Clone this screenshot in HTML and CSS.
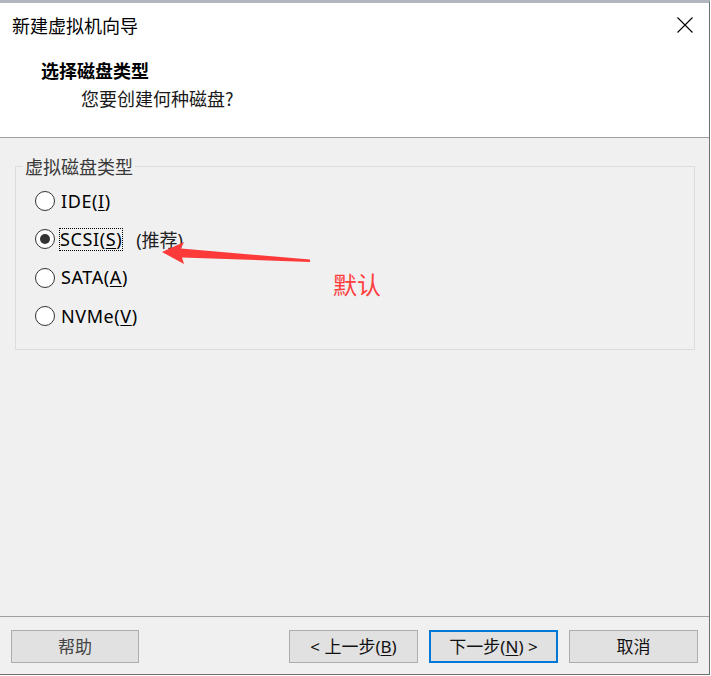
FILE: index.html
```html
<!DOCTYPE html>
<html lang="zh-CN">
<head>
<meta charset="utf-8">
<title>新建虚拟机向导</title>
<link rel="stylesheet" href="styles.css">
</head>
<body>
<div class="window">
  <header class="header">
    <div class="title-row">
      <span class="title">新建虚拟机向导</span>
      <svg class="close" width="16" height="16" viewBox="0 0 16 16"><path d="M0.5 0.5 L15.5 15.5 M15.5 0.5 L0.5 15.5" stroke="#000" stroke-width="1.1" fill="none"/></svg>
    </div>
    <h1 class="heading">选择磁盘类型</h1>
    <p class="subtitle">您要创建何种磁盘?</p>
  </header>
  <main class="body">
    <fieldset class="group">
      <legend class="legend">虚拟磁盘类型</legend>
      <div class="options">
        <div class="option"><span class="radio"></span><span class="label">IDE(<u>I</u>)</span></div>
        <div class="option"><span class="radio checked"></span><span class="label focus">SCSI(<u>S</u>)</span><span class="note">(推荐)</span></div>
        <div class="option"><span class="radio"></span><span class="label">SATA(<u>A</u>)</span></div>
        <div class="option"><span class="radio"></span><span class="label">NVMe(<u>V</u>)</span></div>
      </div>
    </fieldset>
  </main>
  <footer class="footer">
    <button class="btn help">帮助</button>
    <button class="btn">&lt; 上一步(<u>B</u>)</button>
    <button class="btn primary">下一步(<u>N</u>) &gt;</button>
    <button class="btn">取消</button>
  </footer>
  <svg class="arrow" width="711" height="676" viewBox="0 0 711 676"><path d="M162 252 L184 242 L181 248.5 L310 259.5 L310 262 L182 257.5 L184 264 Z" fill="#fd3a3a"/></svg>
  <span class="annot">默认</span>
</div>
</body>
</html>
```

FILE: styles.css
```css
* { box-sizing: border-box; }
html, body { margin: 0; padding: 0; background: #fff; }
body {
  width: 711px;
  height: 676px;
  overflow: hidden;
  font-family: "Noto Sans", "Noto Sans CJK SC", sans-serif;
}
.window {
  position: relative;
  width: 710px;
  height: 675px;
  display: flex;
  flex-direction: column;
  border-top: 3px solid #b2b6be;
  border-right: 1px solid #6f6f6f;
  border-bottom: 1px solid #6f6f6f;
  background: #f0f0f0;
}
.header {
  background: #fff;
  height: 135px;
  border-bottom: 1px solid #a0a0a0;
  padding-top: 10px;
  flex: none;
}
.title-row {
  display: flex;
  justify-content: space-between;
  align-items: center;
  height: 24px;
  padding: 0 16px 0 12px;
}
.title {
  font-family: "Noto Sans CJK SC", sans-serif;
  font-size: 18px;
  line-height: 24px;
  color: #000;
}
.close { display: block; }
.heading {
  margin: 21px 0 0 41px;
  font-family: "Noto Sans CJK SC", sans-serif;
  font-size: 18px;
  line-height: 24px;
  font-weight: 700;
  color: #000;
}
.subtitle {
  margin: 4px 0 0 81px;
  font-family: "Noto Sans CJK SC", sans-serif;
  font-size: 18px;
  line-height: 24px;
  color: #1a1a1a;
}
.body {
  flex: 1;
  padding: 18px 0 0 15px;
}
.group {
  margin: 0;
  padding: 6px 0 0 0;
  width: 680px;
  height: 194px;
  border: 1px solid #dcdcdc;
  min-inline-size: 0;
}
.legend {
  margin-left: 7px;
  padding: 0 2px;
  font-family: "Noto Sans CJK SC", sans-serif;
  font-size: 18px;
  line-height: 20px;
  color: #3a3a3a;
}
.options {
  display: flex;
  flex-direction: column;
  padding-left: 19px;
}
.option {
  display: flex;
  align-items: center;
  height: 38.3px;
}
.radio {
  width: 20px;
  height: 20px;
  border: 1px solid #333;
  border-radius: 50%;
  background: #fff;
  display: flex;
  align-items: center;
  justify-content: center;
  flex: none;
}
.radio.checked::after {
  content: "";
  width: 10px;
  height: 10px;
  border-radius: 50%;
  background: #333;
}
.label {
  margin-left: 5px;
  font-size: 18px;
  line-height: 21px;
  letter-spacing: 0.6px;
  color: #000;
  border: 1px dotted transparent;
  padding: 0;
}
.label u { text-underline-offset: 2px; }
.label.focus { border-color: #000; margin-left: 4px; }
.note {
  margin-left: 13px;
  font-family: "Noto Sans", "Noto Sans CJK SC", sans-serif;
  font-size: 18px;
  color: #222;
}
.footer {
  flex: none;
  height: 58px;
  border-top: 1px solid #a0a0a0;
  padding: 13px 11px 11px 11px;
  display: flex;
  gap: 11px;
}
.btn {
  width: 129px;
  height: 33px;
  background: #e1e1e1;
  border: 1px solid #adadad;
  font-family: "Noto Sans", "Noto Sans CJK SC", sans-serif;
  font-size: 17px;
  color: #111;
  padding: 0;
  line-height: 1;
}
.btn u { text-underline-offset: 2px; }
.btn.help { width: 128px; margin-right: auto; color: #444; }
.btn.primary { border: 2px solid #0078d7; }
.arrow {
  position: absolute;
  left: 0;
  top: -3px;
  pointer-events: none;
}
.annot {
  position: absolute;
  left: 333px;
  top: 266px;
  font-family: "Noto Sans CJK SC", sans-serif;
  font-size: 24px;
  line-height: 30px;
  color: #ff3d3d;
}
```
